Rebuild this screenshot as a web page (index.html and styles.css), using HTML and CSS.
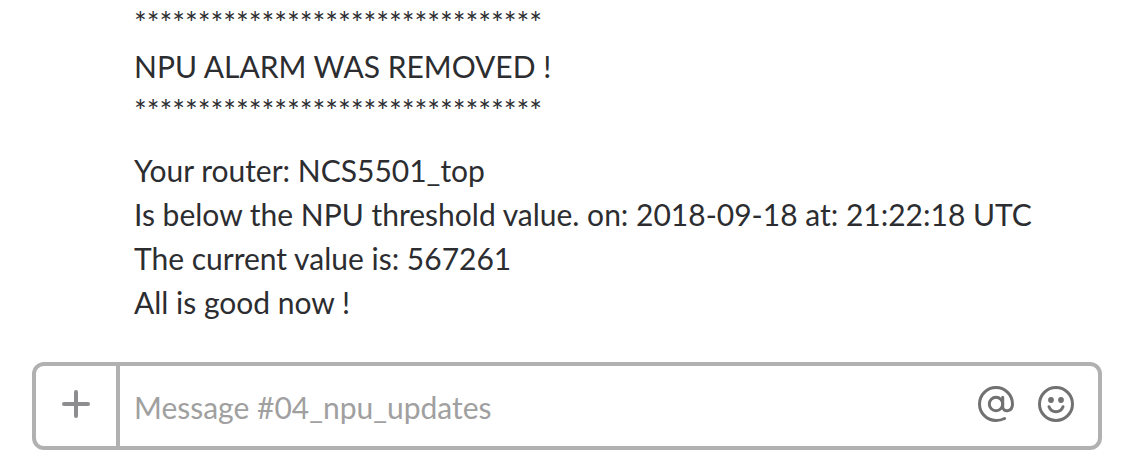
FILE: index.html
```html
<!DOCTYPE html>
<html lang="en">
<head>
<meta charset="utf-8">
<title>04_npu_updates</title>
<link rel="stylesheet" href="styles.css">
</head>
<body>
<main class="message">
  <p class="line">********************************</p>
  <p class="line">NPU ALARM WAS REMOVED !</p>
  <p class="line">********************************</p>
  <div class="details">
    <p class="line">Your router: NCS5501_top</p>
    <p class="line">Is below the NPU threshold value. on: 2018-09-18 at: 21:22:18 UTC</p>
    <p class="line">The current value is: 567261</p>
    <p class="line">All is good now !</p>
  </div>
</main>
<footer class="composer">
  <button class="add" aria-label="Add">
    <svg class="plus" width="28" height="28" viewBox="0 0 28 28"><path d="M14 2v24M2 14h24"/></svg>
  </button>
  <div class="field">Message #04_npu_updates</div>
  <div class="tools">
    <svg width="38" height="38" viewBox="0 0 38 38"><circle cx="19" cy="19" r="6.700"/><path d="M25.700 12.300v9.700c0 5.400 9.800 5.400 9.800-3A16.500 16.500 0 1 0 19 35.500c3.200 0 6-.7 8.600-2"/></svg>
    <svg width="38" height="38" viewBox="0 0 38 38"><circle cx="19" cy="19" r="16.500"/><path d="M12 21.700c1.300 3.400 3.800 5 7 5s5.700-1.600 7-5"/><circle class="eye" cx="14" cy="15" r="2.900"/><circle class="eye" cx="24" cy="15" r="2.900"/></svg>
  </div>
</footer>
</body>
</html>
```
FILE: styles.css
```css
* { box-sizing: border-box; }
body { margin: 0; height: 476px; overflow: hidden; background: #fff; color: #2c2d30; font-family: Lato, sans-serif; font-size: 30px; -webkit-font-smoothing: antialiased; }
.message { height: 362px; padding-left: 134px; }
.line { margin: 0; height: 44px; line-height: 44px; white-space: pre; }
.details { padding-top: 16px; }
.composer { display: flex; width: 1070px; height: 88px; margin-left: 32px; border: 4px solid #b1b1b1; border-radius: 12px; }
.add { display: flex; align-items: center; justify-content: center; width: 84px; padding: 0 0 4px; border: 0; border-right: 4px solid #b1b1b1; background: none; }
.field { flex: 1; padding-left: 14px; line-height: 82px; color: #a0a0a0; }
.tools { display: flex; gap: 22px; padding: 19px 23px 0 0; }
svg { fill: none; stroke: #717171; stroke-width: 3; stroke-linecap: round; }
.plus { stroke: #8d8d8f; stroke-width: 4; }
.eye { fill: #717171; stroke: none; }
```
